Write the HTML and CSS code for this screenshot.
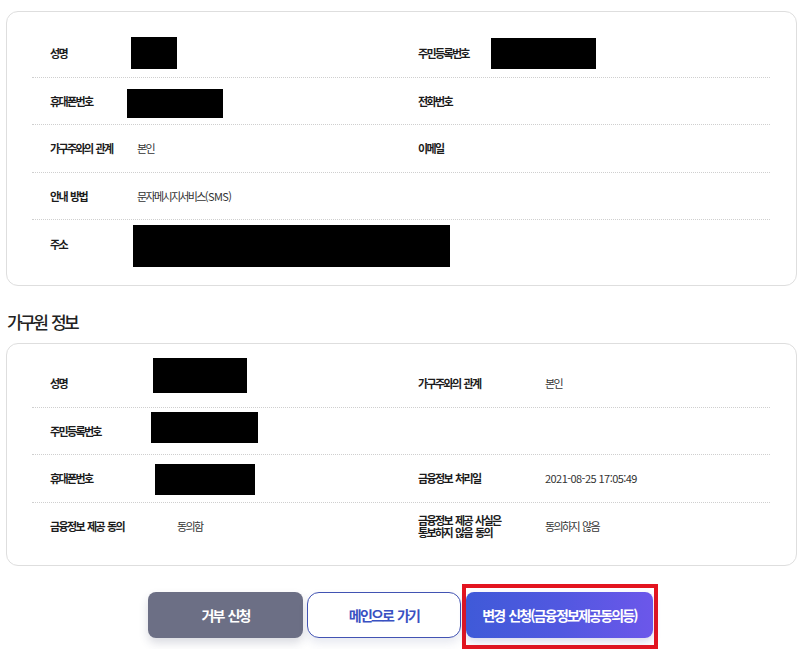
FILE: index.html
```html
<!DOCTYPE html>
<html lang="ko">
<head>
<meta charset="utf-8">
<title>가구원 정보</title>
<link rel="stylesheet" href="styles.css">
</head>
<body>
<div class="page">
  <section class="card card-owner">
    <div class="row">
      <div class="cell"><span class="label">성명</span><span class="value"><i class="redact ra"></i></span></div>
      <div class="cell"><span class="label">주민등록번호</span><span class="value"><i class="redact rb"></i></span></div>
    </div>
    <div class="row">
      <div class="cell"><span class="label">휴대폰번호</span><span class="value"><i class="redact rc"></i></span></div>
      <div class="cell"><span class="label">전화번호</span><span class="value"></span></div>
    </div>
    <div class="row">
      <div class="cell"><span class="label">가구주와의 관계</span><span class="value">본인</span></div>
      <div class="cell"><span class="label">이메일</span><span class="value"></span></div>
    </div>
    <div class="row">
      <div class="cell"><span class="label">안내 방법</span><span class="value">문자메시지서비스<span class="en">(SMS)</span></span></div>
      <div class="cell"></div>
    </div>
    <div class="row">
      <div class="cell span2"><span class="label">주소</span><span class="value"><i class="redact rd"></i></span></div>
    </div>
  </section>

  <h2 class="section-title">가구원 정보</h2>

  <section class="card card-member">
    <div class="row">
      <div class="cell"><span class="label">성명</span><span class="value"><i class="redact sa"></i></span></div>
      <div class="cell"><span class="label">가구주와의 관계</span><span class="value">본인</span></div>
    </div>
    <div class="row">
      <div class="cell"><span class="label">주민등록번호</span><span class="value"><i class="redact sb"></i></span></div>
      <div class="cell"></div>
    </div>
    <div class="row">
      <div class="cell"><span class="label">휴대폰번호</span><span class="value"><i class="redact sc"></i></span></div>
      <div class="cell"><span class="label">금융정보 처리일</span><span class="value"><span class="en">2021-08-25 17:05:49</span></span></div>
    </div>
    <div class="row">
      <div class="cell"><span class="label">금융정보 제공 동의</span><span class="value">동의함</span></div>
      <div class="cell"><span class="label two-line">금융정보 제공 사실은<br>통보하지 않음 동의</span><span class="value">동의하지 않음</span></div>
    </div>
  </section>
</div>

<div class="actions">
  <button class="btn btn-gray" type="button">거부 신청</button>
  <button class="btn btn-outline" type="button">메인으로 가기</button>
  <div class="highlight">
    <button class="btn btn-primary" type="button">변경 신청(금융정보제공동의등)</button>
  </div>
</div>
</body>
</html>
```

FILE: styles.css
```css
* { box-sizing: border-box; }

html, body {
  margin: 0;
  padding: 0;
  background: #ffffff;
}

body {
  font-family: "Noto Sans CJK KR", "Noto Sans", sans-serif;
  color: #222;
}

.page {
  padding: 11px 9px 0 6px;
}

.card {
  border: 1px solid #dedede;
  border-radius: 12px;
  background: #fff;
  padding: 18px 26px 17px 25px;
}

.card-owner { --lw: 87px; }
.card-member { --lw: 127px; padding-top: 16px; padding-bottom: 15px; }

.row {
  display: grid;
  grid-template-columns: 1fr 1fr;
  height: 47.5px;
  border-bottom: 1px dotted #cfcfcf;
}

.row:last-child { border-bottom: none; }

.cell {
  display: flex;
  align-items: center;
  padding-left: 18px;
  min-width: 0;
}

.cell + .cell { padding-left: 17px; }

.cell.span2 { grid-column: 1 / span 2; }

.label {
  flex: 0 0 var(--lw);
  font-size: 11px;
  font-weight: 700;
  color: #1b1b1b;
  letter-spacing: -0.15em;
  word-spacing: 0.15em;
  white-space: nowrap;
}

.label.two-line {
  line-height: 12px;
}

.value {
  display: flex;
  align-items: center;
  font-size: 11px;
  color: #333;
  letter-spacing: -0.15em;
  word-spacing: 0.15em;
  white-space: pre;
}

.en { letter-spacing: -0.05em; word-spacing: 0; }

.redact {
  display: block;
  background: #000;
}

.ra { width: 46px; height: 32px; margin-left: -6px; }
.rb { width: 105px; height: 31px; margin-left: -14px; }
.rc { width: 96px; height: 29px; margin-left: -10px; margin-top: 5px; }
.rd { width: 317px; height: 42px; margin-left: -4px; margin-top: 4px; }
.sa { width: 94px; height: 35px; margin-left: -24px; margin-top: -16px; }
.sb { width: 107px; height: 31px; margin-left: -26px; margin-top: -6px; }
.sc { width: 100px; height: 31px; margin-left: -22px; margin-top: 2px; }

.section-title {
  margin: 24.5px 0 9px 1px;
  font-size: 17px;
  line-height: 24px;
  font-weight: 500;
  color: #222;
  letter-spacing: -0.15em;
  word-spacing: 0.15em;
}

.actions {
  display: flex;
  justify-content: center;
  align-items: flex-start;
  margin-top: 18px;
}

.btn {
  height: 46px;
  font-family: "Noto Sans CJK KR", "Noto Sans", sans-serif;
  font-size: 14px;
  font-weight: 700;
  letter-spacing: -0.13em;
  word-spacing: 0.13em;
  border: none;
  cursor: pointer;
  padding: 0;
}

.btn-gray {
  width: 155px;
  margin-top: 8px;
  background: #6c6f85;
  color: #fff;
  border-radius: 8px;
  box-shadow: 0 5px 10px rgba(50, 55, 90, 0.18);
}

.btn-outline {
  width: 154px;
  margin-top: 8px;
  margin-left: 4px;
  background: #fff;
  color: #3a51c2;
  border: 1px solid #4253b3;
  border-radius: 12px;
  box-shadow: 0 5px 10px rgba(60, 70, 130, 0.12);
}

.highlight {
  margin-left: 1px;
  border: 4px solid #e3141f;
  padding: 4px 1px 7px 0;
}

.btn-primary {
  display: block;
  width: 187px;
  color: #fff;
  border-radius: 8px;
  background: linear-gradient(90deg, #3f5ad8 0%, #5158e0 50%, #6c57ea 100%);
  box-shadow: 0 4px 8px rgba(70, 70, 160, 0.2);
}
```
